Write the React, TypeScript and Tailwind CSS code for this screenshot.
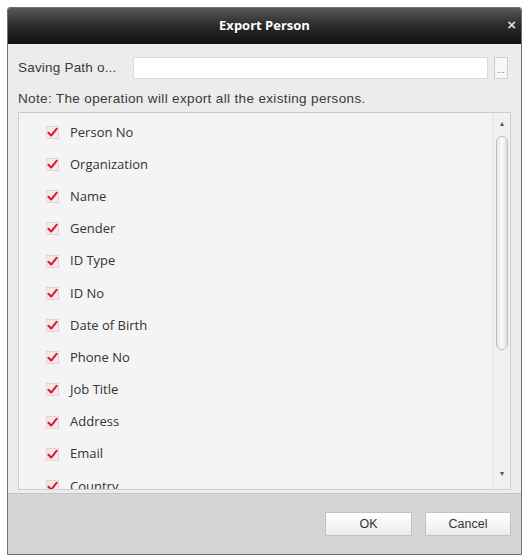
import React from "react";

const fields = [
  "Person No",
  "Organization",
  "Name",
  "Gender",
  "ID Type",
  "ID No",
  "Date of Birth",
  "Phone No",
  "Job Title",
  "Address",
  "Email",
  "Country",
];

function Check() {
  return (
    <span className="flex h-[13px] w-[13px] items-center justify-center border border-[#ead0d3] bg-[#f8e6e9]">
      <svg width="11" height="11" viewBox="0 0 11 11">
        <path d="M1.5 5.8 L4.2 8.6 L9.6 1.8" fill="none" stroke="#c8202e" strokeWidth="2" strokeLinecap="round" strokeLinejoin="round" />
      </svg>
    </span>
  );
}

export default function App() {
  return (
    <div className="h-[559px] w-[529px] bg-white pl-[7px] pt-[7px]" style={{ fontFamily: "'Liberation Sans', Arial, sans-serif" }}>
      <div className="flex h-[548px] w-[515px] flex-col overflow-hidden rounded-t-[3px] border border-[#6f6f6f] bg-[#ececec]">
        {/* title bar */}
        <div className="relative flex h-[36px] shrink-0 items-center justify-center bg-gradient-to-b from-[#5a5a5a] via-[#2a2a2a] to-[#111111]">
          <span className="text-[13px] font-bold text-white" style={{ fontFamily: "'Open Sans', sans-serif" }}>Export Person</span>
          <span className="absolute right-[5px] top-[9px] text-[15px] font-bold leading-none text-[#d8d8d8]">×</span>
        </div>

        {/* path row */}
        <div className="flex items-center pl-[10px] pr-[13px] pt-[13px]">
          <span className="w-[115px] text-[13.5px] tracking-[0.2px] text-[#3a3a3a]">Saving Path o...</span>
          <div className="h-[22px] flex-1 border border-[#dcdcdc] bg-white" />
          <div className="ml-[6px] flex h-[22px] w-[14px] items-end justify-center border border-[#cfcfcf] bg-[#f7f7f7] pb-[3px] text-[9px] leading-none text-[#666]">...</div>
        </div>

        <div className="pl-[10px] pt-[10px] text-[13.5px] tracking-[0.35px] text-[#3a3a3a]">Note: The operation will export all the existing persons.</div>

        {/* field list */}
        <div className="mx-[10px] mt-[3px] flex h-[378px] border border-[#cdcdcd] bg-[#f4f4f4]">
          <div className="flex flex-1 flex-col overflow-hidden pl-[27px] pt-[3px]">
            {fields.map((f) => (
              <div key={f} className="flex h-[32.2px] shrink-0 items-center gap-[11px]">
                <Check />
                <span className="text-[13px] text-[#333]" style={{ fontFamily: "'Open Sans', sans-serif" }}>{f}</span>
              </div>
            ))}
          </div>
          {/* scrollbar */}
          <div className="flex w-[18px] flex-col items-center border-l border-[#e6e6e6] bg-[#f0f0f0] py-[4px]">
            <div className="flex h-[14px] items-center text-[8px] leading-none text-[#555]">▴</div>
            <div className="mt-[5px] h-[214px] w-[12px] rounded-full border border-[#bdbdbd] bg-gradient-to-r from-[#e6e6e6] via-[#fafafa] to-[#dedede]" />
            <div className="flex-1" />
            <div className="mb-[4px] flex h-[14px] items-center text-[8px] leading-none text-[#555]">▾</div>
          </div>
        </div>

        {/* footer */}
        <div className="mt-[3px] flex flex-1 items-center justify-end gap-[13px] border-t border-[#c4c4c4] bg-[#d5d5d5] pr-[10px]">
          <button className="h-[24px] w-[87px] border border-[#c2c2c2] bg-gradient-to-b from-white to-[#ececec] text-[12.5px] text-[#333]">OK</button>
          <button className="h-[24px] w-[86px] border border-[#c2c2c2] bg-gradient-to-b from-white to-[#ececec] text-[12.5px] text-[#333]">Cancel</button>
        </div>
      </div>
    </div>
  );
}
